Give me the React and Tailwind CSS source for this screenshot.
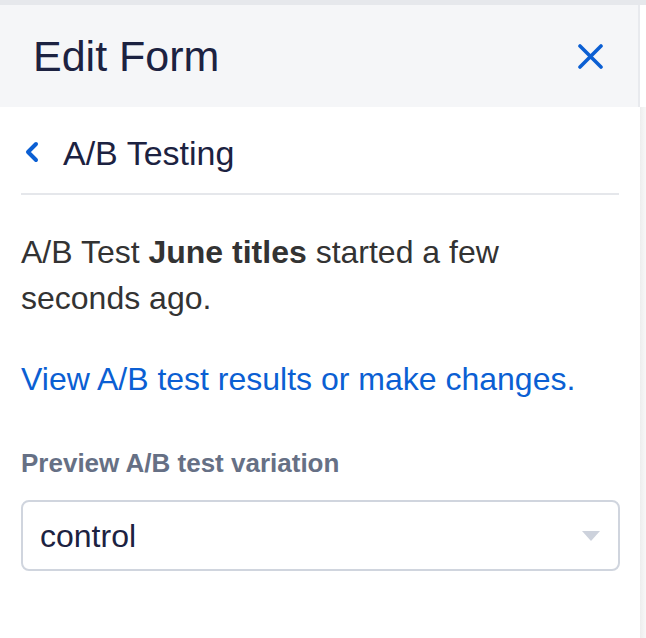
export default function App() {
  return (
    <div
      className="flex h-[638px] w-full flex-col bg-white"
      style={{ fontFamily: '"Liberation Sans", Arial, sans-serif' }}
    >
      <div className="h-[5px] shrink-0 bg-[#e6e8ec]" />
      <div className="flex flex-1">
        {/* Panel */}
        <div className="flex w-[640px] flex-col">
          <header className="flex h-[102px] shrink-0 items-center justify-between border-r-2 border-[#e8eaee] bg-[#f5f6f8] pl-[33px] pr-[35px]">
            <h1 className="text-[43px] leading-none text-[#1c2241]">Edit Form</h1>
            <button className="text-[#0b5fd3]">
              <svg width="25" height="25" viewBox="0 0 25 25" fill="none" stroke="currentColor" strokeWidth="3.6" strokeLinecap="round">
                <path d="M2 2L23 23M23 2L2 23" />
              </svg>
            </button>
          </header>

          <div className="px-[21px]">
            <div className="flex h-[88px] items-center gap-[24px] border-b-2 border-[#e5e7eb] pl-[4px] pt-[6px]">
              <svg width="14" height="22" viewBox="0 0 14 22" fill="none" stroke="#0b5fd3" strokeWidth="4" strokeLinecap="round" strokeLinejoin="round" className="mt-[-2px]">
                <path d="M11 3L3 11L11 19" />
              </svg>
              <span className="text-[34px] text-[#1c2241]">A/B Testing</span>
            </div>

            <p className="mt-[34px] text-[32px] leading-[46px] text-[#333333]">
              A/B Test <b className="font-bold">June titles</b> started a few seconds ago.
            </p>

            <a className="mt-[34px] block text-[32px] leading-[48px] text-[#0b5fd3]" href="#">
              View A/B test results or make changes.
            </a>

            <label className="mt-[41px] block text-[26px] font-bold leading-[39px] text-[#667085]">
              Preview A/B test variation
            </label>

            <div className="mt-[17px] flex h-[71px] w-[599px] items-center justify-between rounded-[8px] border-2 border-[#d0d5de] pl-[17px] pr-[18px]">
              <span className="text-[32px] text-[#1c2241]">control</span>
              <svg width="18" height="10" viewBox="0 0 18 10">
                <path d="M0 0H18L9 10Z" fill="#cdd2dc" />
              </svg>
            </div>
          </div>
        </div>

        {/* Right edge */}
        <div className="flex flex-1 flex-col">
          <div className="h-[102px] bg-white" />
          <div className="flex-1 bg-gradient-to-r from-[#ededed] to-[#f8f8f8]" />
        </div>
      </div>
    </div>
  );
}
